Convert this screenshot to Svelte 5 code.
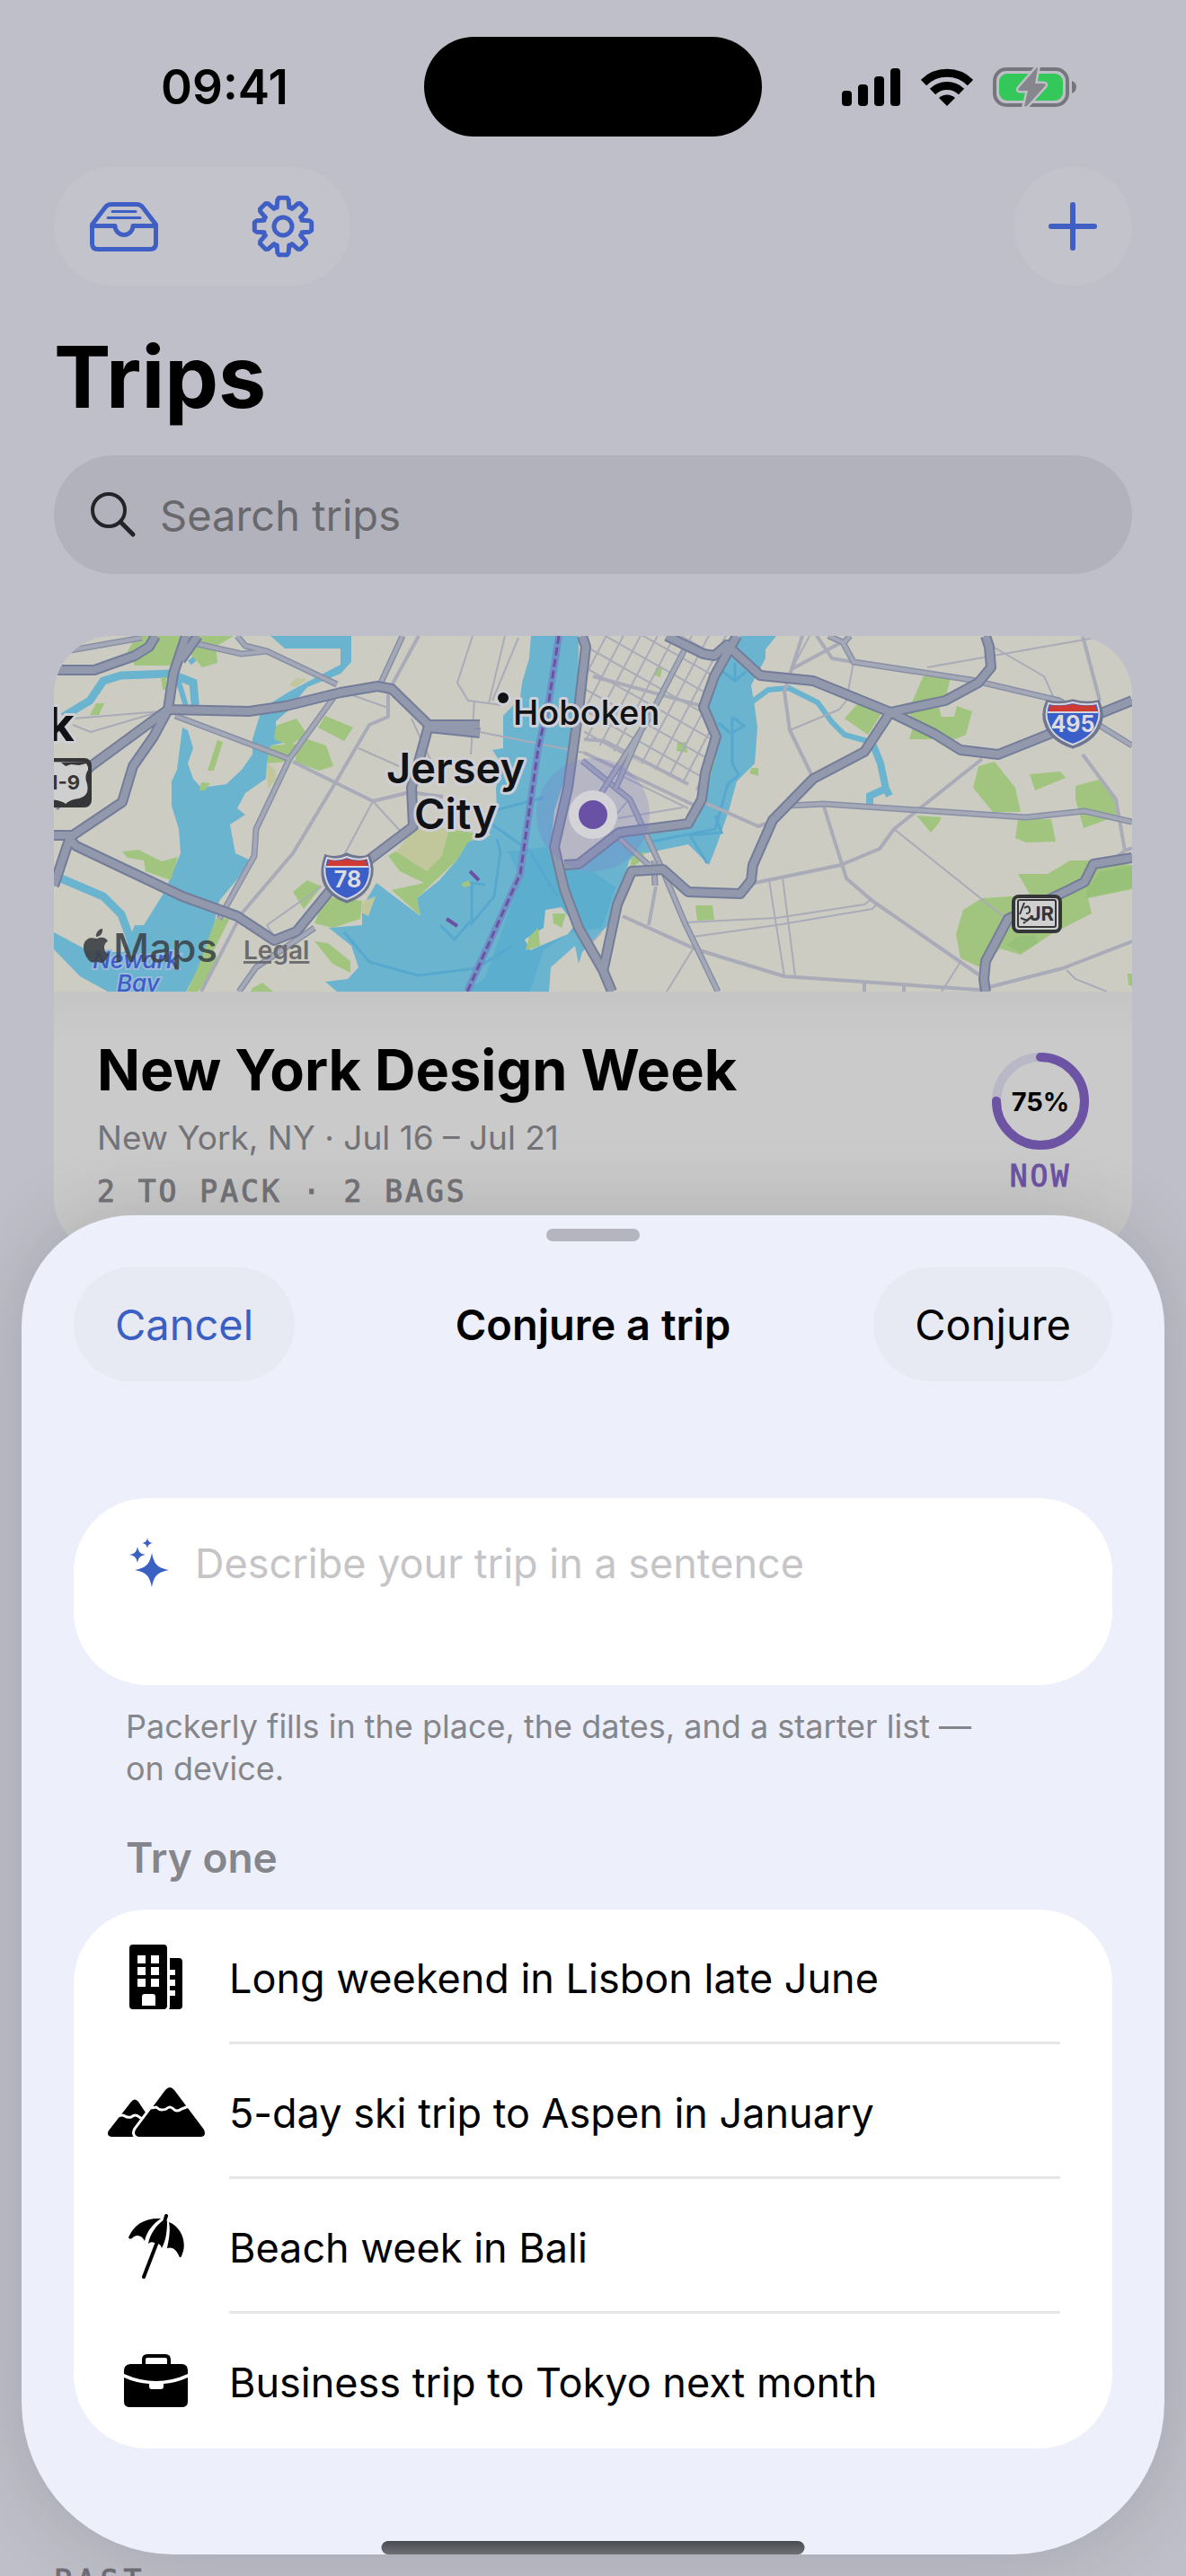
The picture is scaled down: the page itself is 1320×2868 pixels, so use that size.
<script lang="ts">
	type IconName = 'building' | 'mountains' | 'umbrella' | 'briefcase';

	interface Suggestion {
		icon: IconName;
		text: string;
	}

	const suggestions: Suggestion[] = [
		{ icon: 'building', text: 'Long weekend in Lisbon late June' },
		{ icon: 'mountains', text: '5-day ski trip to Aspen in January' },
		{ icon: 'umbrella', text: 'Beach week in Bali' },
		{ icon: 'briefcase', text: 'Business trip to Tokyo next month' }
	];

	const packed = 75;
	const ringLength = 2 * Math.PI * 49;

	let query = $state('');
	let prompt = $state('');
	let sheetOpen = $state(true);

	function polar(r: number, deg: number): string {
		const a = ((deg - 90) * Math.PI) / 180;
		return `${(35 + r * Math.cos(a)).toFixed(1)},${(35 + r * Math.sin(a)).toFixed(1)}`;
	}

	// Eight teeth, each one two valley points and two crown points.
	function gearPath(): string {
		const points: string[] = [];
		for (let t = 0; t < 360; t += 45) {
			points.push(polar(22, t - 18), polar(30, t - 12), polar(32, t - 8));
			points.push(polar(32, t + 8), polar(30, t + 12), polar(22, t + 18));
			points.push(polar(23, t + 22));
		}
		return `M${points.join('L')}Z`;
	}

	function star(cx: number, cy: number, r: number): string {
		const k = r * 0.14;
		const m = r * 0.32;
		return (
			`M${cx} ${cy - r}C${cx + k} ${cy - m} ${cx + m} ${cy - k} ${cx + r} ${cy}` +
			`C${cx + m} ${cy + k} ${cx + k} ${cy + m} ${cx} ${cy + r}` +
			`C${cx - k} ${cy + m} ${cx - m} ${cy + k} ${cx - r} ${cy}` +
			`C${cx - m} ${cy - k} ${cx - k} ${cy - m} ${cx} ${cy - r}Z`
		);
	}

	const avenues = Array.from({ length: 12 }, (_, i) => 575 + i * 19);
	const streets = Array.from({ length: 11 }, (_, i) => -70 + i * 24);

	const highways = [
		'M0 38H45L90 22 106 12 113 0',
		'M147 0 133 42 127 82M160 0 141 27',
		'M127 82 217 84 258 78 319 63 360 56 376 59 417 99 474 99M417 102 474 108',
		'M417 100 398 169 400 212 351 249 306 285 270 329 245 339 204 312 143 290 25 234 17 226',
		'M127 82 41 145 0 190M127 82 111 112 88 145 76 185 21 222 0 222M18 224 0 278',
		'M588 0 592 12 584 82 572 169 557 235 568 282 584 325 611 372 621 396',
		'M611 374 627 299 643 262 678 260 706 285 764 287 776 272 778 255 800 205 845 159 902 129 931 85 992 72 1029 52 1043 35 1041 12 1037 0',
		'M682 0 723 20 735 22 749 10 786 44 845 50 931 85 980 109 1009 127 1051 132 1106 110 1200 72',
		'M760 0 735 45 723 79 737 112 725 152 721 182 706 209 629 219 584 254 568 255',
		'M1200 247 1157 254 1147 274 1127 284 1062 315 1037 362 1035 382 1037 396'
	];

	const roads = [
		'M13 17 98 2M160 9 209 20 237 17 315 54M204 0 213 11 237 17M388 0 364 52',
		'M135 89 262 137 311 69M262 137 225 215 223 245 184 315',
		'M290 325 225 369 206 396',
		'M862 0 878 7 890 29 1021 49 1119 72 1200 122M886 0 878 9',
		'M817 189 857 187 1082 202 1147 195 1200 207',
		'M588 139 641 182 678 262 702 319 739 396M629 225 662 255',
		'M702 15 662 92 609 175M655 102 625 170M668 250 669 278'
	];

	const streetsMinor = [
		'M372 59V90L351 99 313 164 266 242 209 309 164 396',
		'M406 0 376 55M833 0 813 62 819 105 843 154',
		'M1145 0 1164 72M1145 132 1182 182 1192 239 1180 248M1192 239 1200 236',
		'M1033 137 935 215 919 237 876 255 780 275',
		'M857 190 882 270 911 295 1029 377',
		'M633 312 715 349 813 379 1029 394 1123 370 1200 340',
		'M723 185 784 212 795 208M670 279 662 322M849 0 866 25 890 29',
		'M886 2 821 37M266 140 355 184 396 174 433 179M902 385V396M946 387V396',
		'M590 115 613 117 706 165M590 130 720 192M600 45 725 79'
	];

	const lanes = [
		'M890 29 882 72 874 82 819 105M935 215 1060 315M972 35 1159 2M1045 12 1102 45 1113 69',
		'M702 319 804 314 902 299 911 292M711 335 804 322 911 304 917 297',
		'M796 272 813 379M811 269 825 379M711 349 682 396M1127 372 1137 382 1172 396M1009 363 988 396',
		'M355 184 388 220M355 184 323 244M466 0 449 52 461 72 498 77M502 0 484 75M517 2 488 72',
		'M468 72 464 132M339 125 384 145M298 279 237 322 245 335M21 92 119 84M21 99 41 107 119 84',
		'M600 340 609 330M474 107 590 130M841 0 821 37M398 92 420 140M315 60 372 80',
		'M609 175 640 130M628 203 700 191M603 226 640 182M620 150 706 192'
	];

	const parks = [
		'M92 0H200L180 12 182 30 165 35 150 18 130 33H90L82 17Z',
		'M247 100 270 92 282 110 262 122 245 115Z',
		'M302 89 333 102 323 117 294 102Z',
		'M274 112 303 122 311 145 295 150 268 140Z',
		'M241 122 270 120 258 140 237 142Z',
		'M182 116 188 118 178 150 171 150Z',
		'M164 163 174 164 168 172 162 172Z',
		'M76 240 94 238 120 251 138 246 130 272 102 262 100 250 82 247Z',
		'M266 285 282 272 298 279 278 304Z',
		'M302 290 343 295 341 315 310 325 290 320Z',
		'M440 215 486 222 461 229 449 249 404 292 408 312 376 283 412 275 385 262 372 245 380 240 415 262 432 245Z',
		'M290 340 305 342 330 362 330 375 310 365Z',
		'M221 392 232 386 244 396H219Z',
		'M180 315 196 314 183 340 178 350 182 360 170 385 160 396H148L160 370Z',
		'M40 88 47 75 56 75 50 88ZM119 46H125V60H121ZM453 276 462 272 464 278 456 280Z',
		'M529 335 539 325 541 345 525 350ZM555 309H570L565 325 556 320Z',
		'M968 44 998 47 992 70 955 74Z',
		'M894 76 922 85 906 110 880 92Z',
		'M950 84 985 80 988 90 1002 90 1005 78 1022 84 1015 110 1003 115H952L958 95Z',
		'M1029 145 1047 140 1070 169 1076 196 1045 196 1023 169Z',
		'M1086 154 1120 151 1126 158 1092 172Z',
		'M1137 167 1163 160 1180 182 1184 200 1146 214 1137 182Z',
		'M1073 204H1110L1115 229 1082 230 1070 225Z',
		'M960 200 988 202 985 208 976 219Z',
		'M1073 265H1106L1131 250H1155L1200 255V282L1151 292 1155 309 1110 332 1076 355 1053 348 1033 370 1009 359 1004 332 1012 305 1033 292 1066 290 1086 287Z',
		'M714 300H733L735 316 716 317ZM694 119 704 118 705 130 693 128ZM776 147H784V156L774 153Z',
		'M1195 376H1200V390L1196 389ZM670 36 677 34 675 46 669 44ZM735 135 737 135 716 205 710 207 728 165Z',
		'M643 246 658 240 654 250 641 260Z'
	];
</script>

<div class="phone">
	<div class="status-bar">
		<time class="clock">09:41</time>
		<div class="island"></div>
		<div class="status-icons">
			<svg width="66" height="42" viewBox="0 0 66 42" aria-hidden="true">
				<rect x="0" y="25" width="11" height="17" rx="4" />
				<rect x="18" y="18" width="11" height="24" rx="4" />
				<rect x="36" y="9" width="11" height="33" rx="4" />
				<rect x="54" y="0" width="11" height="42" rx="4" />
			</svg>
			<svg width="58" height="43" viewBox="0 0 58 43" aria-hidden="true">
				<g fill="none" stroke="#000" stroke-width="9">
					<path d="M3 17A37 37 0 0 1 55 17" />
					<path d="M13 27A23 23 0 0 1 45 27" />
				</g>
				<path d="M29 43 20 34A13 13 0 0 1 38 34Z" />
			</svg>
			<svg width="94" height="46" viewBox="0 0 94 46" aria-hidden="true">
				<rect x="2" y="3" width="81" height="40" rx="13" fill="none" stroke="#76767c" stroke-width="4" />
				<rect x="7" y="8" width="71" height="30" rx="9" fill="#34c759" />
				<path d="M88 16Q93 18 93 23T88 30Z" fill="#76767c" />
				<path
					d="M49 1 29 24Q27 27 30 27H39L35 44Q36 45 38 44L58 22Q60 19 56 19H47L50 2Z"
					fill="#86878c"
					stroke="#bfbfc9"
					stroke-width="5"
					paint-order="stroke"
				/>
			</svg>
		</div>
	</div>

	<main class="trips">
		<div class="toolbar">
			<div class="tool-group">
				<button aria-label="Archive">
					<svg width="76" height="55" viewBox="0 0 76 55" fill="none" stroke="currentColor" stroke-width="5" stroke-linejoin="round">
						<path d="M2.5 25 17 6Q19.500 2.500 24 2.500H52Q56.500 2.500 59 6L73.500 25V46Q73.500 52.500 67 52.500H9Q2.500 52.500 2.500 46Z" />
						<path d="M2.500 26.500H28A10 10 0 0 0 48 26.500H73.500" />
						<path d="M25 10.500H51M20 17.500H56" stroke-width="3" stroke-linecap="round" />
					</svg>
				</button>
				<button aria-label="Settings">
					<svg width="70" height="70" viewBox="0 0 70 70" fill="none" stroke="currentColor" stroke-width="5" stroke-linejoin="round">
						<path d={gearPath()} />
						<circle cx="35" cy="35" r="10" />
					</svg>
				</button>
			</div>
			<button class="add" aria-label="New trip" onclick={() => (sheetOpen = true)}>
				<svg width="54" height="54" viewBox="0 0 54 54" stroke="currentColor" stroke-width="6" stroke-linecap="round">
					<path d="M27 3V51M3 27H51" />
				</svg>
			</button>
		</div>

		<h1>Trips</h1>

		<label class="search">
			<svg width="52" height="52" viewBox="0 0 52 52" fill="none" stroke="#232328" stroke-width="4" stroke-linecap="round">
				<circle cx="21" cy="21" r="18" />
				<path d="M34 34 48 48" stroke-width="5" />
			</svg>
			<input type="text" placeholder="Search trips" aria-label="Search trips" bind:value={query} />
		</label>

		<article class="card">
			<svg class="map" viewBox="0 0 1200 396" role="img" aria-label="Map of New York">
				<defs>
					<clipPath id="grid">
						<path d="M590 0H757L735 45 723 79 737 112 722 175 640 135 590 115Z" />
					</clipPath>
				</defs>
				<rect width="1200" height="396" fill="#cdccc2" />

				<g fill="#6ab4cf">
					<path
						d="M241 0H331V29L319 42 302 49 282 57 272 69 262 82 247 95V109L274 115 241 122 237 142 236 159 213 175 204 192 213 199 196 210 202 242 217 249 209 265 184 295 178 322 160 372 147 396H60L29 379 0 349V330L41 352H78L90 322H100L123 285 141 242 139 215 131 189V162L137 149 143 102 149 105 155 125 149 142 155 159 164 169 192 165 209 149 221 132V115L229 89 241 75 262 62 294 45 319 32V14H257Z"
					/>
					<path
						d="M531 0 529 25 521 52 519 69 500 89V125L488 127 498 142 492 169 493 195 470 205 486 222 461 229 449 249 429 272 404 292 408 312 359 275 343 302V322L306 325 331 345 339 369 327 382 302 385 315 396H551L553 369 580 345 584 365 588 352 600 339 617 322 621 305 633 272 641 249 658 242 706 232 729 255 737 235 751 195 760 162 780 142 783 102 780 79 776 55 792 25V15L804 0H764L751 15 735 55 725 79 737 112 731 149 723 189 706 212 658 219 625 222 600 242 584 259 564 252 553 235 557 195 574 142 582 82 584 15V0Z"
					/>
				</g>
				<g fill="none" stroke="#6ab4cf">
					<path d="M10 90 40 72 55 50 75 44 130 42 155 52 158 85M8 270 55 290 75 310 88 345" stroke-width="9" />
					<path d="M151 30 160 23 175 25M137 45 147 78" stroke-width="6" />
					<path d="M776 74 795 60 818 58 850 74 866 96 880 110 905 117" stroke-width="6" />
					<path d="M912 122 920 142 926 170 930 178M926 170 908 178V188" stroke-width="8" />
				</g>
				<path
					d="M505 240 520 270 480 380 460 396H530L545 350 575 330 610 325 625 280 600 262 565 260 548 235Z"
					fill="#57abce"
					opacity="0.7"
				/>
				<g fill="none" stroke="#57a8cf" stroke-width="3">
					<path d="M323 330 351 363 405 378 470 370 510 345" />
					<path d="M488 195 545 180M488 210 530 240 560 290M493 226 497 240 490 290 465 320 465 275 480 277M430 322 446 338 463 318" />
					<path d="M758 30V50L742 38M758 50 770 40M755 90V110L740 97M755 90 768 100 755 108M755 110V142L762 155 750 165 736 215 660 230M736 200 743 219 708 222 727 253" />
				</g>

				<path d="M547 305 565 302 580 322 572 332 530 350 524 338 545 325Z" fill="#cdccc2" />
				<path d="M404 209 440 215 432 250 415 262 380 242ZM262 55 270 47 281 48 270 57ZM237 142 246 148 248 160 238 170ZM345 295 358 290 350 312 342 308Z" fill="#c1c79b" />
				<g fill="#a1c47f">
					{#each parks as d}
						<path {d} />
					{/each}
				</g>
				<path d="M1150 282 1165 262 1200 257V280L1148 292ZM1060 345 1072 335 1092 332 1095 342 1076 352Z" fill="#97c178" />

				<g stroke="#a9abb8" stroke-width="2" clip-path="url(#grid)">
					{#each avenues as x}
						<path d="M{x + 45} -10 {x - 60} 190" />
					{/each}
					{#each streets as y}
						<path d="M575 {y} 760 {y + 105}" />
					{/each}
				</g>
				<g fill="none" stroke="#a9abb8" stroke-linejoin="round">
					{#each lanes as d}
						<path {d} stroke-width="2" />
					{/each}
					{#each streetsMinor as d}
						<path {d} stroke-width="4" />
					{/each}
				</g>
				<g fill="none" stroke-linejoin="round">
					{#each roads as d}
						<path {d} stroke="#8890a6" stroke-width="7" />
						<path {d} stroke="#a5a9b7" stroke-width="4" />
					{/each}
					{#each highways as d}
						<path {d} stroke="#737d99" stroke-width="12" />
					{/each}
					{#each highways as d}
						<path {d} stroke="#9299ad" stroke-width="8" />
					{/each}
					<path d="M562 0 551 72 539 125 529 195 519 265 460 396" stroke="#6f92c6" stroke-width="8" />
					<path d="M562 0 551 72 539 125 529 195 519 265 460 396" stroke="#6d51a5" stroke-width="3" stroke-dasharray="9 4" />
					<path d="M463 262 473 272M437 315 449 323" stroke="#6d51a5" stroke-width="4" />
				</g>

				<circle cx="600" cy="199" r="63" fill="#7678cc" opacity="0.26" />
				<circle cx="600" cy="199" r="27" fill="#d3d3d8" />
				<circle cx="600" cy="199" r="16" fill="#6951a6" />

				<g class="place">
					<text class="town" x="511" y="99">Hoboken</text>
					<text class="city" x="447" y="164" text-anchor="middle">Jersey</text>
					<text class="city" x="447" y="215" text-anchor="middle">City</text>
					<text class="city k" x="23" y="117" text-anchor="end">k</text>
					<circle cx="500" cy="69" r="6" />
				</g>

				<g>
					<rect x="-20" y="138" width="60" height="51" rx="6" fill="#cfcfcf" stroke="#343638" stroke-width="4" />
					<path d="M-18 141H8L13 145 19 143 28 144 36 142 39 148Q33 155 37 165 40 178 28 181 18 182 13 187 8 182-18 181V189H39V140Z" fill="#343638" fill-rule="evenodd" />
					<path d="M-18 146H6L13 149 20 147 29 148 33 146Q30 155 32 163 36 174 27 177 18 178 13 183 8 178-18 177Z" fill="#cfcfcf" />
					<text class="shield-text route" x="29" y="171" text-anchor="end">1-9</text>
				</g>
				<g>
					<path d="M303 246Q315 250 326 244 338 250 350 246 356 260 351 272 347 288 326 295 306 288 301 272 298 260 303 246Z" fill="#3a5fc8" stroke="#6f7690" stroke-width="5" />
					<path d="M304 247Q315 251 326 246 338 251 349 247 354 260 350 271 346 286 326 293 307 286 303 271 299 260 304 247Z" fill="#3a5fc8" stroke="#d6d6da" stroke-width="2" />
					<path d="M306 249Q316 252 326 248 337 252 347 249L349 256H304Z" fill="#cf3b32" />
					<path d="M303 257H350" stroke="#d6d6da" stroke-width="2" />
					<text class="shield-text" x="327" y="280" text-anchor="middle">78</text>
				</g>
				<g>
					<path d="M1106 74Q1120 77 1134 73 1148 77 1162 74 1168 88 1163 99 1157 115 1134 123 1111 115 1105 99 1100 88 1106 74Z" fill="#3a5fc8" stroke="#6f7690" stroke-width="5" />
					<path d="M1107 75Q1120 78 1134 74 1148 78 1161 75 1166 88 1161 98 1156 113 1134 121 1112 113 1107 98 1102 88 1107 75Z" fill="#3a5fc8" stroke="#d6d6da" stroke-width="2" />
					<path d="M1109 77Q1121 79 1134 76 1147 79 1159 77L1161 84H1107Z" fill="#cf3b32" />
					<path d="M1106 85H1162" stroke="#d6d6da" stroke-width="2" />
					<text class="shield-text" x="1134" y="107" text-anchor="middle">495</text>
				</g>
				<g>
					<rect x="1068" y="290" width="52" height="39" rx="6" fill="#d0d0d0" stroke="#343638" stroke-width="4" />
					<rect x="1073" y="294" width="42" height="30" rx="2" fill="none" stroke="#343638" stroke-width="2" />
					<path d="M1075 310 1080 297M1080 303Q1085 299 1086 304T1082 309M1076 314 1083 317 1088 313M1079 320 1086 314" fill="none" stroke="#343638" stroke-width="2" />
					<text class="shield-text dark" x="1113" y="317" text-anchor="end">JR</text>
				</g>

				<text class="water" x="43" y="370">Newark</text>
				<text class="water" x="70" y="396">Bay</text>
				<g fill="#3c4145" opacity="0.9">
					<path d="M48 337C52 335 58 335 60 340 54 343 55 352 61 354 59 360 56 364 53 364 50 364 49 362 46 363 43 364 41 364 38 360 32 352 31 342 37 338 41 335 44 337 48 337Z" />
					<path d="M47 335C46 331 50 326 54 326 55 331 51 335 47 335Z" />
				</g>
				<text class="brand" x="66" y="363">Maps</text>
				<text class="legal" x="211" y="360">Legal</text>
			</svg>

			<div class="card-body">
				<div class="card-text">
					<h2>New York Design Week</h2>
					<p class="where">New York, NY · Jul 16 – Jul 21</p>
					<p class="counts">2 TO PACK · 2 BAGS</p>
				</div>
				<div class="progress">
					<div class="ring">
						<svg width="108" height="108" viewBox="0 0 108 108" fill="none" stroke-width="10" aria-hidden="true">
							<circle cx="54" cy="54" r="49" stroke="#b9b8c6" />
							<circle
								cx="54"
								cy="54"
								r="49"
								stroke="#6d53a4"
								stroke-linecap="round"
								stroke-dasharray="{(ringLength * packed) / 100} {ringLength}"
								transform="rotate(-90 54 54)"
							/>
						</svg>
						<span>{packed}%</span>
					</div>
					<span class="now">NOW</span>
				</div>
			</div>
		</article>

		<h2 class="section">PAST</h2>
	</main>

	{#if sheetOpen}
		<section class="sheet" aria-label="Conjure a trip">
			<div class="grabber"></div>
			<header>
				<button class="pill cancel" onclick={() => (sheetOpen = false)}>Cancel</button>
				<h2>Conjure a trip</h2>
				<button class="pill">Conjure</button>
			</header>

			<label class="prompt">
				<svg width="46" height="58" viewBox="0 0 46 58" fill="currentColor" aria-hidden="true">
					<path d={star(26, 38, 19)} />
					<path d={star(10, 21, 9)} />
					<path d={star(21, 8, 6)} />
				</svg>
				<textarea placeholder="Describe your trip in a sentence" aria-label="Describe your trip in a sentence" bind:value={prompt}></textarea>
			</label>
			<p class="hint">Packerly fills in the place, the dates, and a starter list — on device.</p>

			<h3>Try one</h3>
			<ul>
				{#each suggestions as item}
					<li>
						<button class="suggestion" onclick={() => (prompt = item.text)}>
							<span class="icon">
								{#if item.icon === 'building'}
									<svg width="60" height="72" viewBox="0 0 60 72">
										<path
											fill-rule="evenodd"
											d="M4 0H38Q42 0 42 4V68Q42 72 38 72H4Q0 72 0 68V4Q0 0 4 0ZM9 12V21H18V12ZM24 12V21H33V12ZM9 25V34H18V25ZM24 25V34H33V25ZM9 38V47H18V38ZM24 38V47H33V38ZM14 68H29V58Q29 55 26 55H17Q14 55 14 58Z"
										/>
										<path d="M45 15H55Q59 15 59 19V68Q59 72 55 72H44Q45 71 45 68V57H51V51H45V46H51V39H45V34H51V28H45Z" />
									</svg>
								{:else if item.icon === 'mountains'}
									<svg width="108" height="55" viewBox="0 0 108 55">
										<path d="M26 16Q30 11 34 16L46 34 30 55H4Q-2 54 1 48Z" />
										<path d="M12 32Q16 30 19 32T26 33Q31 29 35 33T44 31" fill="none" stroke="#fff" stroke-width="3" />
										<path d="M64 3Q69-3 74 3L107 47Q110 54 104 55H34Q28 53 31 47Z" stroke="#fff" stroke-width="6" paint-order="stroke" />
										<path d="M48 23 54 22Q57 25 60 25T65 24Q69 20 73 24T82 24L90 21" fill="none" stroke="#fff" stroke-width="3" />
									</svg>
								{:else if item.icon === 'umbrella'}
									<svg width="62" height="72" viewBox="0 0 62 72">
										<path d="M0 26C6 12 18 4 36 5 27 11 20 20 18 30 15 23 8 22 4 27Q1 29 0 26Z" />
										<path d="M40 6C31 12 24 22 22 33Q25 30 29 32L33 33Q36 34 37 38C42 29 43 18 43 8Z" />
										<path d="M45 9C58 14 64 29 61 41L59 47Q57 50 56 46C53 39 48 36 43 38 45 28 47 18 45 9Z" />
										<path d="M17 70 32 31M42 2 40 9" fill="none" stroke="#000" stroke-width="4" stroke-linecap="round" />
									</svg>
								{:else}
									<svg width="72" height="60" viewBox="0 0 72 60">
										<path d="M22 13V6Q22 2 26 2H46Q50 2 50 6V13" fill="none" stroke="#000" stroke-width="4" />
										<path d="M7 11H65Q71 12 71 18V22Q36 38 0 22V18Q0 12 7 11Z" />
										<path d="M0 26Q13 32 28 33V36Q28 39 31 39H41Q44 39 44 36V33Q58 32 71 26V53Q71 59 64 59H7Q0 59 0 53Z" />
									</svg>
								{/if}
							</span>
							<span class="label">{item.text}</span>
						</button>
					</li>
				{/each}
			</ul>
			<div class="home-indicator"></div>
		</section>
	{/if}
</div>

<style>
	:global(body) {
		margin: 0;
		background: #bfbfc9;
	}

	.phone {
		position: relative;
		display: flex;
		flex-direction: column;
		height: 100vh;
		overflow: hidden;
		background: #bfbfc9;
		color: #000;
		font-family: Inter, 'Liberation Sans', sans-serif;
		font-size: 45px;
	}

	h1,
	h2,
	h3,
	p,
	ul {
		margin: 0;
		padding: 0;
	}

	button,
	input,
	textarea {
		border: none;
		padding: 0;
		background: transparent;
		color: inherit;
		font: inherit;
		outline: none;
	}

	svg {
		display: block;
		flex-shrink: 0;
	}

	.status-bar {
		display: grid;
		grid-template-columns: 1fr 376px 1fr;
		align-items: center;
		padding: 41px 0 34px;
	}

	.clock {
		padding-left: 28px;
		text-align: center;
		font-size: 53px;
		font-weight: 600;
		line-height: 60px;
	}

	.island {
		height: 111px;
		border-radius: 56px;
		background: #000;
	}

	.status-icons {
		display: flex;
		align-items: center;
		justify-content: center;
		gap: 22px;
		padding-right: 32px;
	}

	.trips {
		flex: 1;
		display: flex;
		flex-direction: column;
		padding: 0 60px;
	}

	.toolbar {
		display: flex;
		justify-content: space-between;
	}

	.tool-group,
	.add {
		height: 132px;
		border-radius: 66px;
		background: #c3c3cc;
		color: #3f5fc4;
	}

	.tool-group {
		display: flex;
		justify-content: space-between;
		align-items: center;
		gap: 104px;
		padding: 0 40px;
	}

	.add {
		display: grid;
		place-items: center;
		width: 132px;
	}

	h1 {
		margin: 42px 0 27px;
		font-size: 95px;
		font-weight: 700;
		line-height: 120px;
	}

	.search {
		display: flex;
		align-items: center;
		gap: 26px;
		height: 132px;
		padding: 0 40px;
		border-radius: 66px;
		background: #b2b2bc;
		font-size: 47px;
	}

	.search input {
		flex: 1;
		min-width: 0;
	}

	.search input::placeholder {
		color: #68686d;
		opacity: 1;
	}

	.card {
		margin-top: 69px;
		border-radius: 66px;
		background: #cacaca;
		overflow: hidden;
		flex-shrink: 0;
	}

	.map {
		width: 100%;
		height: auto;
	}

	.place {
		fill: #111214;
		stroke: #cfcfd6;
		stroke-width: 6px;
		paint-order: stroke;
		stroke-linejoin: round;
	}

	.town {
		font-size: 38px;
		font-weight: 500;
	}

	.city {
		font-size: 47px;
		font-weight: 600;
	}

	.k {
		font-size: 52px;
		font-weight: 700;
	}

	.shield-text {
		fill: #dcdce0;
		font-size: 25px;
		font-weight: 700;
	}

	.dark,
	.route {
		fill: #343638;
		font-size: 22px;
	}

	.water {
		fill: #3b5fc6;
		stroke: #9ab9dc;
		stroke-width: 4px;
		paint-order: stroke;
		font-size: 26px;
		font-style: italic;
		font-weight: 500;
	}

	.brand {
		fill: #3c4145;
		fill-opacity: 0.9;
		font-size: 44px;
		font-weight: 500;
	}

	.legal {
		fill: #6c6c70;
		font-size: 28px;
		font-weight: 600;
		text-decoration: underline;
	}

	.card-body {
		display: flex;
		align-items: center;
		justify-content: space-between;
		padding: 51px 48px;
		background: linear-gradient(#c5c5c5, #cacaca 60px);
	}

	.card-text {
		display: flex;
		flex-direction: column;
		gap: 16px;
	}

	.card-text h2 {
		font-size: 63px;
		font-weight: 700;
		line-height: 72px;
	}

	.where {
		color: #737378;
		font-size: 37px;
		line-height: 48px;
	}

	.counts,
	.now,
	.section {
		font-family: 'DejaVu Sans Mono', 'Liberation Mono', monospace;
		font-size: 33px;
		font-weight: 400;
		line-height: 40px;
		letter-spacing: 3px;
		-webkit-text-stroke: 1px currentColor;
	}

	.counts {
		color: #737378;
	}

	.progress {
		display: flex;
		flex-direction: column;
		align-items: center;
		gap: 10px;
	}

	.ring {
		display: grid;
		place-items: center;
	}

	.ring > * {
		grid-area: 1 / 1;
	}

	.ring span {
		font-size: 29px;
		font-weight: 700;
	}

	.now {
		color: #6d53a4;
	}

	.section {
		height: 14px;
		margin-top: auto;
		color: #6f6f76;
		letter-spacing: 6px;
	}

	.sheet {
		position: absolute;
		right: 24px;
		bottom: 24px;
		left: 24px;
		padding: 15px 58px 118px;
		border-radius: 124px 124px 170px 170px;
		background: #edeffa;
		box-shadow: 0 0 90px rgba(0, 0, 20, 0.14);
	}

	.grabber {
		width: 104px;
		height: 14px;
		margin: 0 auto 29px;
		border-radius: 7px;
		background: #b5b5c0;
	}

	header {
		display: grid;
		grid-template-columns: 1fr auto 1fr;
		align-items: center;
		margin-bottom: 130px;
	}

	header h2 {
		font-size: 47px;
		font-weight: 600;
	}

	.pill {
		justify-self: end;
		height: 127px;
		padding: 0 46px;
		border-radius: 64px;
		background: #e7eaf3;
		font-size: 47px;
	}

	.cancel {
		justify-self: start;
		color: #3a60c4;
	}

	.prompt {
		display: flex;
		align-items: flex-start;
		gap: 28px;
		padding: 42px 58px;
		border-radius: 82px;
		background: #fff;
		color: #3a60c4;
	}

	.prompt svg {
		padding-left: 3px;
	}

	.prompt textarea {
		flex: 1;
		height: 124px;
		color: #000;
		line-height: 62px;
		resize: none;
	}

	.prompt textarea::placeholder {
		color: #c5c5c7;
		opacity: 1;
	}

	.hint {
		max-width: 960px;
		margin: 23px 58px 44px;
		color: #85868b;
		font-size: 36px;
		line-height: 47px;
	}

	h3 {
		margin: 0 58px 27px;
		color: #85868b;
		font-size: 46px;
		font-weight: 600;
		line-height: 62px;
	}

	ul {
		border-radius: 82px;
		background: #fff;
		list-style: none;
		overflow: hidden;
	}

	.suggestion {
		display: flex;
		align-items: center;
		gap: 26px;
		width: 100%;
		height: 150px;
		padding: 0 58px 0 37px;
		text-align: left;
	}

	.icon {
		display: grid;
		place-items: center;
		width: 110px;
	}

	.label {
		flex: 1;
		display: flex;
		align-items: center;
		height: 100%;
		box-sizing: border-box;
		padding-top: 6px;
		border-bottom: 3px solid #e6e6e6;
	}

	li:last-child .label {
		border-bottom-color: transparent;
	}

	.home-indicator {
		position: absolute;
		bottom: 0;
		left: 50%;
		width: 471px;
		height: 15px;
		border-radius: 8px;
		background: linear-gradient(#484b50, #707074);
		transform: translateX(-50%);
	}
</style>
